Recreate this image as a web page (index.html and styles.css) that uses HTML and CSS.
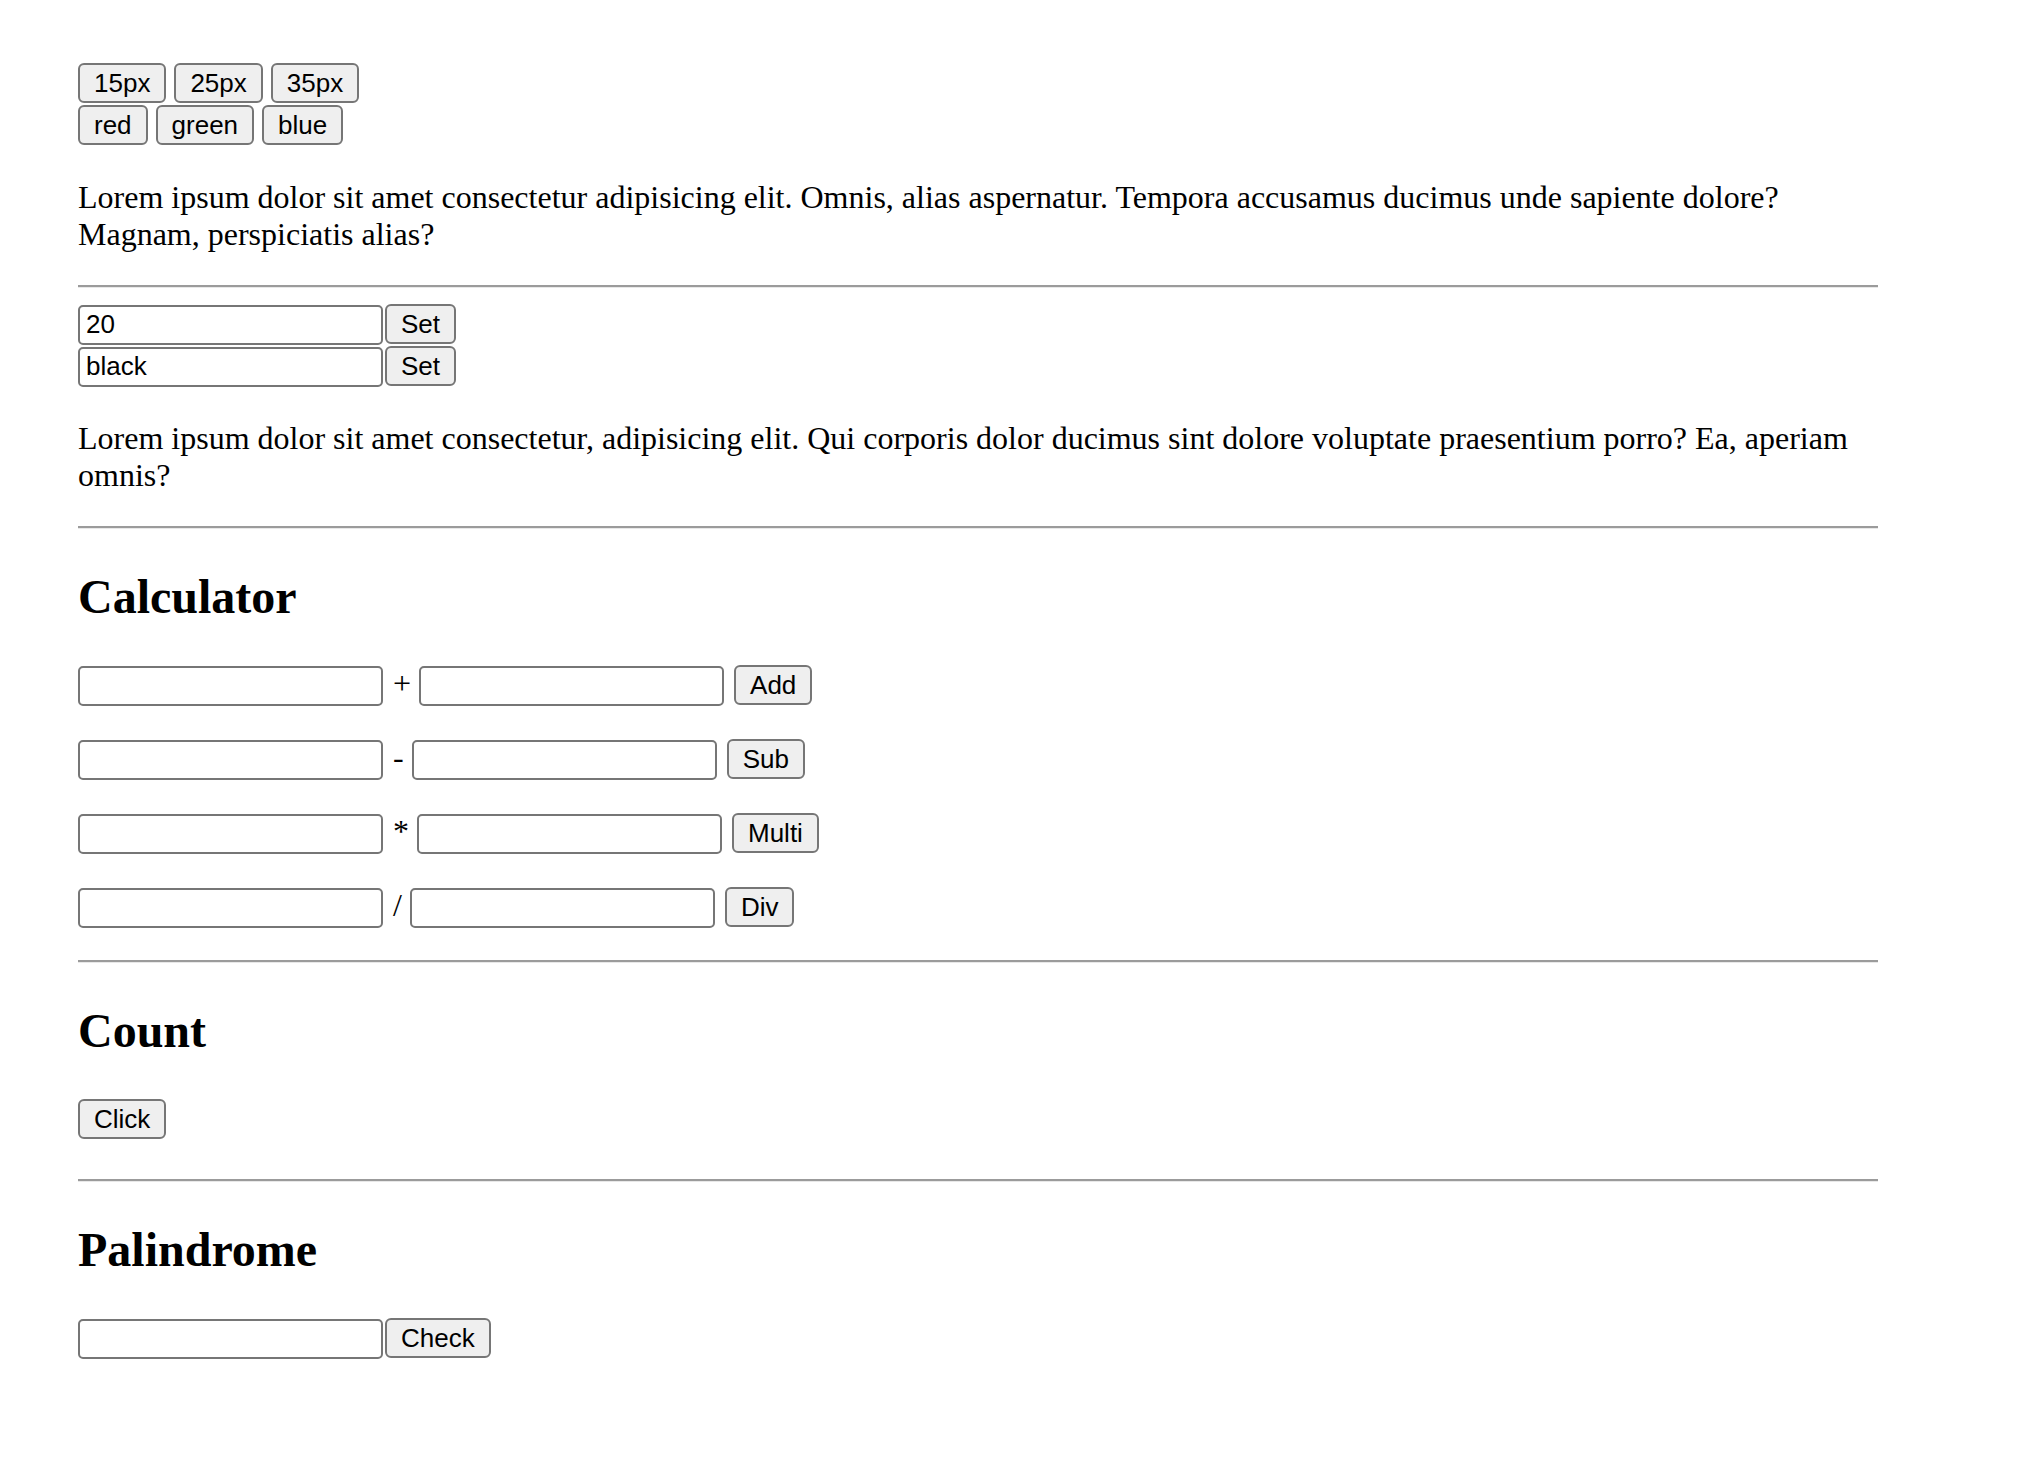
FILE: index.html
```html
<!DOCTYPE html>
<html lang="en">
<head>
<meta charset="utf-8">
<title>DOM practice</title>
<link rel="stylesheet" href="styles.css">
</head>
<body>
<div class="page">
  <div class="line"><button class="btn">15px</button> <button class="btn">25px</button> <button class="btn">35px</button></div>
  <div class="line"><button class="btn">red</button> <button class="btn">green</button> <button class="btn">blue</button></div>
  <p>Lorem ipsum dolor sit amet consectetur adipisicing elit. Omnis, alias aspernatur. Tempora accusamus ducimus unde sapiente dolore? Magnam, perspiciatis alias?</p>
  <hr class="rule">
  <div class="line"><input class="field" type="text" value="20"><button class="btn">Set</button></div>
  <div class="line"><input class="field" type="text" value="black"><button class="btn">Set</button></div>
  <p>Lorem ipsum dolor sit amet consectetur, adipisicing elit. Qui corporis dolor ducimus sint dolore voluptate praesentium porro? Ea, aperiam omnis?</p>
  <hr class="rule">
  <h2 class="title">Calculator</h2>
  <p class="row"><input class="field" type="text"> + <input class="field" type="text"> <button class="btn">Add</button></p>
  <p class="row"><input class="field" type="text"> - <input class="field" type="text"> <button class="btn">Sub</button></p>
  <p class="row"><input class="field" type="text"> * <input class="field" type="text"> <button class="btn">Multi</button></p>
  <p class="row"><input class="field" type="text"> / <input class="field" type="text"> <button class="btn">Div</button></p>
  <hr class="rule">
  <h2 class="title">Count</h2>
  <p class="row count"><button class="btn">Click</button></p>
  <hr class="rule">
  <h2 class="title">Palindrome</h2>
  <p class="row"><input class="field" type="text"><button class="btn">Check</button></p>
</div>
</body>
</html>
```

FILE: styles.css
```css
html, body {
  margin: 0;
  padding: 0;
  background: #ffffff;
}

.page {
  width: 1800px;
  padding: 63px 0 0 78px;
  font-family: "Liberation Serif", "Times New Roman", serif;
  font-size: 32px;
  color: #000000;
}

.line {
  height: 42px;
  white-space: nowrap;
}

p {
  margin: 32px 0;
  line-height: 37px;
}

.row {
  height: 42px;
  line-height: 38px;
  white-space: nowrap;
}

.count {
  height: 49px;
}

.rule {
  height: 0;
  margin: 16px 0;
  border: 0;
  border-top: 2px solid #9b9b9b;
  border-bottom: 1px solid #e8e8e8;
}

.title {
  font-size: 48px;
  font-weight: bold;
  line-height: 55px;
  margin: 40px 0;
}

.btn {
  font-family: "Liberation Sans", Arial, Helvetica, sans-serif;
  font-size: 26px;
  color: #000000;
  height: 40px;
  padding: 0 14px;
  margin: 0;
  border: 2px solid #767676;
  border-radius: 6px;
  background: #efefef;
  line-height: 34px;
  vertical-align: baseline;
}

.field {
  font-family: "Liberation Sans", Arial, Helvetica, sans-serif;
  font-size: 26px;
  color: #000000;
  box-sizing: border-box;
  width: 305px;
  height: 40px;
  padding: 0 6px;
  margin: 0 2px 0 0;
  border: 2px solid #767676;
  border-radius: 5px;
  background: #ffffff;
  vertical-align: baseline;
}
```
